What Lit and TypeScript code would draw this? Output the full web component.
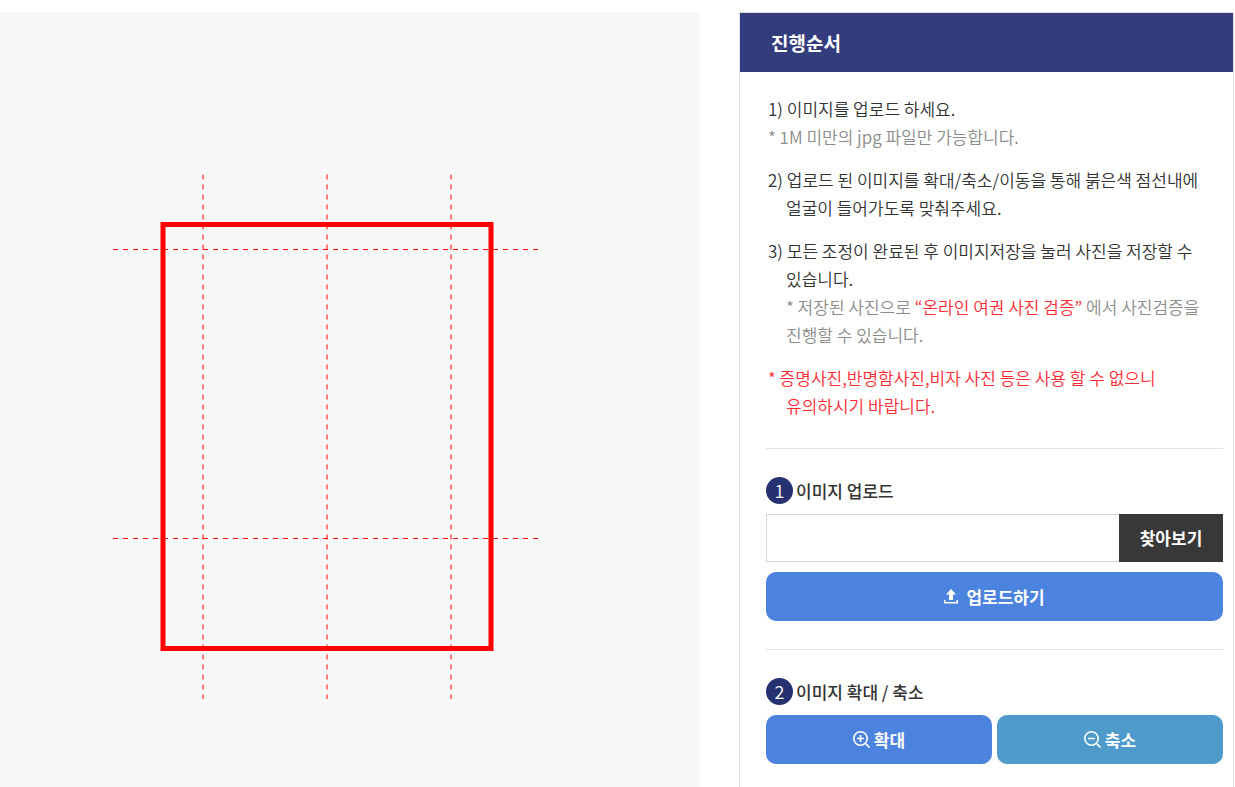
import { LitElement, html, css, svg } from "lit";
import { customElement } from "lit/decorators.js";

const VERTICAL_GUIDES = [203, 327, 451];
const HORIZONTAL_GUIDES = [237.5, 526.5];

@customElement("photo-stage")
class PhotoStage extends LitElement {
  static styles = css`
    :host {
      display: block;
      background: #f7f7f7;
      overflow: hidden;
    }
    .guides {
      display: block;
    }
    .dashed {
      stroke: #ff0000;
      stroke-width: 1;
      stroke-dasharray: 5 5;
    }
    .frame {
      fill: none;
      stroke: #ff0000;
      stroke-width: 5;
    }
  `;

  render() {
    return html`
      <svg class="guides" width="700" height="775" viewBox="0 0 700 775" role="img" aria-label="얼굴 위치 안내선">
        ${VERTICAL_GUIDES.map(
          (x) => svg`<line class="dashed" x1=${x} y1="162.5" x2=${x} y2="687"></line>`
        )}
        ${HORIZONTAL_GUIDES.map(
          (y) => svg`<line class="dashed" x1="113" y1=${y} x2="538" y2=${y}></line>`
        )}
        <rect class="frame" x="163" y="212.5" width="328" height="424"></rect>
      </svg>
    `;
  }
}

@customElement("guide-panel")
class GuidePanel extends LitElement {
  static styles = css`
    :host {
      display: block;
      box-sizing: border-box;
      border: 1px solid #dfe1e4;
      border-bottom: 0;
      color: #333;
      font-size: 17px;
      font-weight: 350;
    }
    .title {
      margin: 0;
      padding: 0 31px;
      background: #333d7d;
      color: #fff;
      font-size: 19px;
      font-weight: 700;
      line-height: 59px;
    }
    .body {
      padding: 23px 10px 24px 26px;
    }
    .steps {
      display: flex;
      flex-direction: column;
      gap: 15px;
      margin: 0;
      padding: 0 0 28px 20px;
      list-style: none;
      line-height: 28px;
    }
    .step {
      text-indent: -18px;
    }
    .note {
      display: block;
      color: #8c8c8c;
    }
    .inner {
      text-indent: 0;
    }
    .red {
      color: #fb2c36;
    }
    .section {
      padding: 28px 0;
      border-top: 1px solid #e1e1e1;
    }
    .heading {
      display: flex;
      align-items: center;
      gap: 3px;
      margin: 0 0 10px;
      font-size: 17px;
      font-weight: 500;
      line-height: 27px;
    }
    .number {
      width: 27px;
      border-radius: 50%;
      background: #26316f;
      color: #fff;
      font-size: 18px;
      font-weight: 350;
      text-align: center;
    }
    .file {
      display: flex;
      height: 48px;
      margin-bottom: 10px;
    }
    .path {
      flex: 1;
      min-width: 0;
      box-sizing: border-box;
      padding: 0 12px;
      border: 1px solid #d7d7d7;
      border-right: 0;
      font: inherit;
      background: #fff;
    }
    button {
      display: flex;
      align-items: center;
      justify-content: center;
      margin: 0;
      padding: 0;
      border: 0;
      color: #fff;
      font-family: inherit;
      font-size: 17px;
      font-weight: 700;
      line-height: 24px;
      cursor: pointer;
    }
    .browse {
      width: 104px;
      background: #383838;
    }
    .action {
      height: 49px;
      width: 100%;
      border-radius: 10px;
      background: #4c83de;
      gap: 4px;
    }
    .upload {
      gap: 8px;
    }
    .shrink {
      background: #4e9acb;
    }
    .pair {
      display: grid;
      grid-template-columns: 1fr 1fr;
      gap: 5px;
    }
  `;

  render() {
    return html`
      <h2 class="title">진행순서</h2>
      <div class="body">
        <ul class="steps">
          <li class="step">1) 이미지를 업로드 하세요.<span class="note">* 1M 미만의 jpg 파일만 가능합니다.</span></li>
          <li class="step">2) 업로드 된 이미지를 확대/축소/이동을 통해 붉은색 점선내에<br />얼굴이 들어가도록 맞춰주세요.</li>
          <li class="step">
            3) 모든 조정이 완료된 후 이미지저장을 눌러 사진을 저장할 수<br />있습니다.
            <span class="note inner">* 저장된 사진으로 <span class="red">“온라인 여권 사진 검증”</span> 에서 사진검증을<br />진행할 수 있습니다.</span>
          </li>
          <li class="step red">* 증명사진,반명함사진,비자 사진 등은 사용 할 수 없으니<br />유의하시기 바랍니다.</li>
        </ul>
        <section class="section">
          <h3 class="heading"><span class="number">1</span><label for="path">이미지 업로드</label></h3>
          <div class="file">
            <input class="path" id="path" type="text" readonly />
            <button class="browse" type="button">찾아보기</button>
          </div>
          <button class="action upload" type="button">
            <svg width="14" height="15" viewBox="0 0 14 15" fill="#fff" aria-hidden="true">
              <path d="M7 0 L12 5.500 H9 V11 H5 V5.500 H2 Z"></path>
              <path d="M0 11 H1.500 V13 H12.500 V11 H14 V14.500 H0 Z"></path>
            </svg>
            업로드하기
          </button>
        </section>
        <section class="section">
          <h3 class="heading"><span class="number">2</span>이미지 확대 / 축소</h3>
          <div class="pair">
            <button class="action" type="button">
              <svg width="17" height="17" viewBox="0 0 17 17" fill="none" stroke="#fff" stroke-width="1.600" aria-hidden="true">
                <circle cx="7.500" cy="7.500" r="6.700"></circle>
                <path d="M12.500 12.500 L16.500 16.500 M4 7.500 H11 M7.500 4 V11"></path>
              </svg>
              확대
            </button>
            <button class="action shrink" type="button">
              <svg width="17" height="17" viewBox="0 0 17 17" fill="none" stroke="#fff" stroke-width="1.600" aria-hidden="true">
                <circle cx="7.500" cy="7.500" r="6.700"></circle>
                <path d="M12.500 12.500 L16.500 16.500 M4 7.500 H11"></path>
              </svg>
              축소
            </button>
          </div>
        </section>
      </div>
    `;
  }
}

@customElement("app-root")
class AppRoot extends LitElement {
  static styles = css`
    :host {
      display: block;
      background: #fff;
      font-family: "Noto Sans CJK KR", "Noto Sans", sans-serif;
    }
    .page {
      display: grid;
      grid-template-columns: minmax(0, 1fr) 495px;
      gap: 39px;
      box-sizing: border-box;
      min-height: 100vh;
      padding: 12px 1px 0 0;
    }
  `;

  render() {
    return html`
      <main class="page">
        <photo-stage></photo-stage>
        <guide-panel></guide-panel>
      </main>
    `;
  }
}
